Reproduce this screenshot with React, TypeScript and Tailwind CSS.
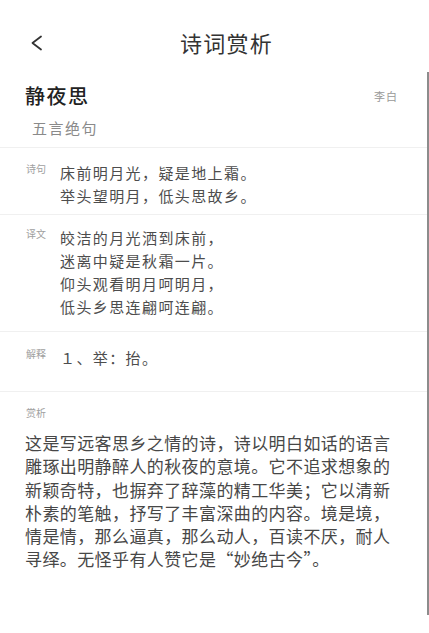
import React from 'react';

const FONT = '"Noto Sans CJK SC", "Noto Sans", sans-serif';

function Row({ label, lines, pt, pb }: { label: string; lines: string[]; pt: string; pb: string }) {
  return (
    <div className={`flex items-start border-b border-[#f0f0f0] pl-[26px] ${pt} ${pb}`}>
      <span className="w-[34px] shrink-0 text-[10px] leading-[14px] text-[#a0a0a0] mt-[1px]">{label}</span>
      <div className="text-[15px] leading-[23px] tracking-[1.4px] text-[#4d4d4d]">
        {lines.map((l) => (
          <div key={l}>{l}</div>
        ))}
      </div>
    </div>
  );
}

export default function App() {
  return (
    <div className="w-[429px] h-[633px] bg-white overflow-hidden" style={{ fontFamily: FONT }}>
      <div className="h-[72px] relative flex items-center justify-center">
        <svg className="absolute left-[30px] top-[35px]" width="13" height="16" viewBox="0 0 13 16" fill="none">
          <path d="M11 1.5 L2.5 8 L11 14.5" stroke="#333" strokeWidth="1.8" strokeLinecap="round" strokeLinejoin="round" />
        </svg>
        <span className="ml-[24px] mt-[12px] text-[22px] tracking-[1.3px] text-[#333]">诗词赏析</span>
      </div>
      <div className="h-[543px] border-r-2 border-[#8c8c8c]">
        <div className="border-b border-[#f0f0f0] pl-[25px] pr-[29px] pt-[12px] pb-[9px]">
          <div className="flex items-center justify-between h-[24px]">
            <span className="text-[20px] tracking-[1.5px] font-medium text-[#222]">静夜思</span>
            <span className="text-[11px] tracking-[1px] text-[#999]">李白</span>
          </div>
          <div className="mt-[10px] ml-[7px] h-[20px] text-[15px] leading-[20px] tracking-[1.5px] text-[#8a8a8a]">五言绝句</div>
        </div>
        <Row label="诗句" lines={['床前明月光，疑是地上霜。', '举头望明月，低头思故乡。']} pt="pt-[13px]" pb="pb-[7px]" />
        <Row
          label="译文"
          lines={['皎洁的月光洒到床前，', '迷离中疑是秋霜一片。', '仰头观看明月呵明月，', '低头乡思连翩呵连翩。']}
          pt="pt-[11px]"
          pb="pb-[13px]"
        />
        <Row label="解释" lines={['１、举：抬。']} pt="pt-[14px]" pb="pb-[22px]" />
        <div className="pl-[25px] pr-[30px] pt-[14px]">
          <div className="text-[10px] leading-[14px] text-[#a0a0a0] ml-[1px]">赏析</div>
          <p className="mt-[11px] w-[372px] text-[17px] leading-[23.3px] tracking-[0.4px] text-[#474747]">
            这是写远客思乡之情的诗，诗以明白如话的语言雕琢出明静醉人的秋夜的意境。它不追求想象的新颖奇特，也摒弃了辞藻的精工华美；它以清新朴素的笔触，抒写了丰富深曲的内容。境是境，情是情，那么逼真，那么动人，百读不厌，耐人寻绎。无怪乎有人赞它是“妙绝古今”。
          </p>
        </div>
      </div>
    </div>
  );
}
